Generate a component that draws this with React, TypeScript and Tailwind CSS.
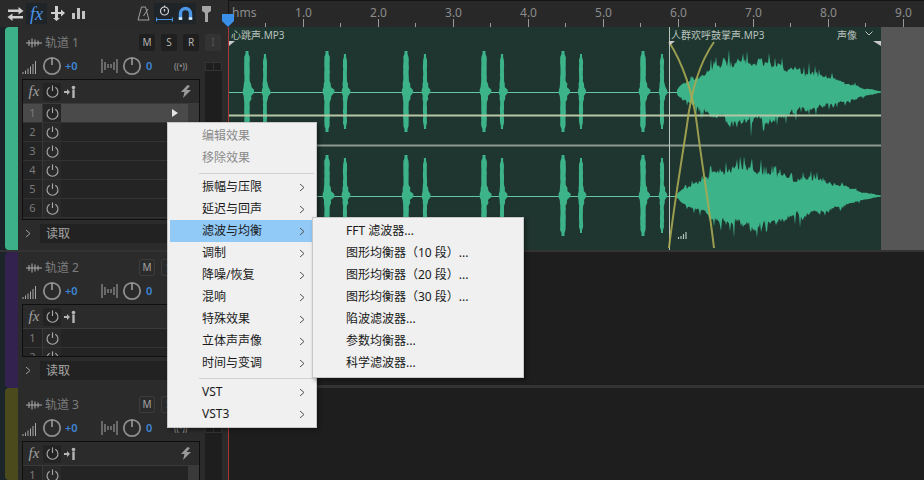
import React from "react";

const rng = (seed: number) => {
  let s = seed;
  return () => {
    s = (s * 1664525 + 1013904223) % 4294967296;
    return s / 4294967296;
  };
};

function burst(x: number, mid: number, h: number, w: number, seed: number) {
  const r = rng(seed);
  const right: string[] = [];
  const left: string[] = [];
  for (let y = -h; y <= h; y += 3) {
    const a = Math.abs(y);
    let hr = w / 2 + r() * 0.4;
    let hl = w / 2 + r() * 0.4;
    if (a < 3) {
      hr = w * 1.35 + r() * 1.2;
      hl = w * 0.8 + r() * 0.6;
    } else if (a < 10) {
      hr = w * 0.75 + r() * 0.8;
      hl = w * 0.6 + r() * 0.4;
    } else if (a > h - 6) {
      hr = w * 0.3;
      hl = w * 0.3;
    }
    right.push(`${(x + hr).toFixed(1)},${mid + y}`);
    left.unshift(`${(x - hl).toFixed(1)},${mid + y}`);
  }
  return "M" + right.concat(left).join("L") + "Z";
}

function envelope(x: number) {
  const pts: [number, number][] = [
    [677, 2], [681, 6], [690, 10], [700, 14], [710, 20], [720, 25], [745, 28], [770, 24],
    [800, 18], [820, 15], [840, 10], [860, 4.5], [881, 0.5],
  ];
  for (let i = 0; i < pts.length - 1; i++) {
    const [a, b] = pts[i];
    const [c, d] = pts[i + 1];
    if (x <= c) return b + ((x - a) / (c - a)) * (d - b);
  }
  return 0;
}

function crowd(mid: number, seed: number, amp: number) {
  const r = rng(seed);
  const top: string[] = [];
  const bot: string[] = [];
  let up0 = 1;
  let dn0 = 1;
  for (let x = 677; x <= 881; x += 1) {
    const e = envelope(x) * amp;
    up0 = up0 * 0.7 + (0.62 + r() * 0.76) * 0.3;
    dn0 = dn0 * 0.7 + (0.62 + r() * 0.76) * 0.3;
    const j = r();
    const k = r();
    const up = e * up0 * (0.9 + r() * 0.2) + (j > 0.88 ? e * (0.15 + r() * 0.35) : 0);
    const dn = e * dn0 * (0.9 + r() * 0.2) + (k > 0.88 ? e * (0.15 + r() * 0.4) : 0);
    top.push(`${x},${(mid - up).toFixed(1)}`);
    bot.unshift(`${x},${(mid + dn).toFixed(1)}`);
  }
  return "M" + top.concat(bot).join("L") + "Z";
}

const BEATS = [247, 265, 327, 345, 406, 425, 484, 502, 563, 581, 643, 662];

function Wave() {
  const paths = React.useMemo(() => {
    const out: string[] = [];
    BEATS.forEach((x, i) => {
      const second = i % 2 === 1;
      out.push(burst(x, 92, second ? 38 : 41, second ? 3.5 : 5, i * 7 + 3));
      out.push(burst(x, 196, second ? 38 : 41, second ? 3.5 : 5, i * 11 + 5));
    });
    out.push(crowd(92, 42, 1.1));
    out.push(crowd(196, 77, 1));
    return out;
  }, []);
  return (
    <svg viewBox="229 27 652 223" width={652} height={223} className="block">
      <path d="M229 92.5H677M229 196.5H677" stroke="#62c7a3" strokeWidth="1" />
      {paths.map((d, i) => (
        <path key={i} d={d} fill="#3db389" />
      ))}
      <path d="M229 115.5H881" stroke="#b6c7a8" strokeWidth="2" />
      <path d="M229 145.5H881" stroke="#8d9a90" strokeWidth="2" />
      <path d="M669.5 27V250" stroke="#b9c4bd" strokeWidth="1" />
      <path d="M669 42C682 62 693 92 697 125C702 165 709 205 714 248" fill="none" stroke="#a8a852" strokeWidth="2" opacity="0.9" />
      <path d="M714 42C700 62 691 92 687 125C681 165 674 205 669 248" fill="none" stroke="#a8a852" strokeWidth="2" opacity="0.9" />
      <path d="M229 46V41H235Z" fill="#c9c9c9" />
      <path d="M669 46V41H675Z" fill="#c9c9c9" />
      <path d="M881 46V41H873Z" fill="#c9c9c9" />
      <path d="M678.5 239v-2M681 239v-3M683.5 239v-5M686 239v-7" stroke="#b5c2bb" strokeWidth="1.2" />
    </svg>
  );
}

function Power({ size = 15 }: { size?: number }) {
  return (
    <svg width={size} height={size} viewBox="0 0 16 16" fill="none" stroke="#a8a8a8" strokeWidth="1.2">
      <path d="M5 3.4A5.8 5.8 0 1 0 11 3.4" />
      <path d="M8 1.5V7.5" />
    </svg>
  );
}

function Knob() {
  return (
    <svg width={20} height={20} viewBox="0 0 20 20" fill="none">
      <circle cx="10" cy="10" r="8.2" stroke="#8e8e8e" strokeWidth="1.8" fill="#2b2b2b" />
      <path d="M10 2V9" stroke="#a5a5a5" strokeWidth="1.5" />
    </svg>
  );
}

function FxHeader({ bolt }: { bolt: boolean }) {
  return (
    <div className="h-[24px] flex items-center border-b border-[#3a3a3a] shrink-0 bg-[#2b2b2b]">
      <span className="w-[16px] ml-[3px] flex justify-center font-['Liberation_Serif',serif] italic text-[#a0a0a0] text-[15px] leading-none">
        fx
      </span>
      <span className="ml-[1px] w-[18px] h-[18px] flex items-center justify-center bg-[#232323] rounded-[2px]">
        <Power />
      </span>
      <svg width={14} height={14} viewBox="0 0 14 14" className="ml-[2px]" fill="#b5b5b5">
        <path d="M1 6H4V4L7 7L4 10V8H1Z" />
        <circle cx="10.5" cy="2.5" r="1.8" />
        <rect x="9.3" y="4.5" width="2.4" height="8.5" />
      </svg>
      {bolt && (
        <svg width={12} height={13} viewBox="0 0 12 13" className="ml-auto mr-[7px]" fill="#9a9a9a">
          <path d="M7.5 0L1 7H4.5L3 13L11 5H6.5L10 1Z" />
        </svg>
      )}
    </div>
  );
}

function FxRow({ n, active }: { n: number; active?: boolean }) {
  return (
    <div className="h-[19px] flex shrink-0 border-b border-[#333333]">
      <div className={`flex flex-1 items-center ${active ? "bg-[#4a4a4a]" : "bg-[#242424]"}`}>
        <span className="w-[20px] text-[11px] text-center text-[#7a7a7a] border-r border-[#383838] leading-[18px]">
          {n}
        </span>
        <span className={`w-[18px] h-[18px] flex items-center justify-center ${active ? "bg-[#262626]" : "bg-[#292929]"}`}>
          <Power />
        </span>
        {active && (
          <svg width={6} height={8} viewBox="0 0 6 8" fill="#e6e6e6" className="ml-auto mr-[10px]">
            <path d="M0 0L6 4L0 8Z" />
          </svg>
        )}
      </div>
      <div className="w-[11px] bg-[#3a3a3a]" />
    </div>
  );
}

function BtnS({ t, dim, outlined }: { t: string; dim?: boolean; outlined?: boolean }) {
  let tone = "bg-[#1f1f1f] text-[#b5b5b5]";
  if (dim) tone = "bg-[#333333] text-[#555555]";
  if (outlined) tone = "bg-[#2b2b2b] border border-[#3c3c3c] text-[#a5a5a5]";
  return (
    <span className={`w-[16px] h-[17px] flex items-center justify-center text-[10px] rounded-[2px] ${tone}`}>{t}</span>
  );
}

function TrackHeader({
  name,
  color,
  fxH,
  rows,
  pt,
  active,
  bolt,
}: {
  name: string;
  color: string;
  fxH: number;
  rows: number;
  pt: number;
  active?: boolean;
  bolt?: boolean;
}) {
  return (
    <div className="w-[228px] h-full flex pl-[5px] shrink-0 bg-[#1b2428] overflow-hidden">
      <div className="w-[13px] rounded-l-[4px] shrink-0" style={{ background: color }} />
      <div className="flex-1 bg-[#2b2b2b] flex flex-col" style={{ paddingTop: pt }}>
        <div className="h-[28px] pt-[3px] flex items-center shrink-0">
          <svg width={16} height={10} viewBox="0 0 16 10" className="ml-[8px]" stroke="#b0b0b0" fill="none">
            <path d="M0 5H16M3 2V8M6 0.5V9.5M9 1.5V8.5M12 2.5V7.5" />
          </svg>
          <span className="ml-[3px] text-[12px] text-[#7d7d7d] w-[94px]">{name}</span>
          <div className="flex gap-[6px]">
            <BtnS t="M" outlined={!active} />
            <BtnS t="S" outlined={!active} />
            <BtnS t="R" outlined={!active} />
            <BtnS t="I" dim />
          </div>
        </div>
        <div className="flex flex-1 min-h-0">
          <div className="w-[187px] flex flex-col shrink-0">
            <div className="h-[22px] flex items-center shrink-0">
              <svg width={16} height={15} viewBox="0 0 16 15" className="ml-[4px]" stroke="#a8a8a8">
                <path d="M1 15V13M3.5 15V11.5M6 15V9.5M8.5 15V7.5M11 15V5M13.5 15V2" />
              </svg>
              <span className="ml-[4px]">
                <Knob />
              </span>
              <span className="ml-[3px] w-[36px] text-[11px] font-semibold text-[#3d86d6]">+0</span>
              <svg width={17} height={14} viewBox="0 0 17 14" stroke="#a8a8a8" fill="none">
                <path d="M1 0V14M4 3V11M7 5V9M10 5V9M13 3V11M16 0V14" />
              </svg>
              <span className="ml-[4px]">
                <Knob />
              </span>
              <span className="ml-[4px] w-[28px] text-[11px] font-semibold text-[#3d86d6]">0</span>
              <span className="text-[8px] text-[#8a8a8a] font-semibold">((•))</span>
            </div>
            <div
              className="ml-[4px] mt-[2px] w-[178px] border border-[#0f0f0f] flex flex-col overflow-hidden shrink-0"
              style={{ height: fxH }}
            >
              <FxHeader bolt={!!bolt} />
              {Array.from({ length: rows }).map((_, i) => (
                <FxRow key={i} n={i + 1} active={active && i === 0} />
              ))}
            </div>
            <div className="h-[19px] mt-[4px] flex items-center shrink-0">
              <svg width={6} height={9} viewBox="0 0 6 9" className="ml-[7px]" fill="none" stroke="#a0a0a0">
                <path d="M1 1L5 4.5L1 8" />
              </svg>
              <span className="ml-[9px] w-[160px] h-[19px] bg-[#222222] text-[12px] text-[#a5a5a5] pl-[6px] leading-[19px]">
                读取
              </span>
            </div>
          </div>
          <div className="w-[17px] mt-[7px] bg-[#1e1e1e] flex flex-col shrink-0">
            <div className="h-[9px] border border-[#333333] flex">
              <div className="flex-1 border-r border-[#333333]" />
              <div className="flex-1" />
            </div>
          </div>
        </div>
      </div>
    </div>
  );
}

function Toolbar() {
  const cell = "w-[21px] h-[21px] flex items-center justify-center";
  return (
    <div className="w-[228px] h-full flex items-center pl-[5px] shrink-0 bg-[#2a2a2a]">
      <span className={cell}>
        <svg width={17} height={14} viewBox="0 0 17 14" fill="#d0d0d0">
          <path d="M1 2.5H11.5V0L16.5 4L11.5 7.5V5H1Z" />
          <path d="M16 9H5.5V6.5L0.5 10L5.5 14V11.5H16Z" />
        </svg>
      </span>
      <span className={`${cell} bg-[#1f2429]`}>
        <span className="font-['Liberation_Serif',serif] italic text-[#4a97e8] text-[18px] leading-none">fx</span>
      </span>
      <span className={cell}>
        <svg width={15} height={15} viewBox="0 0 15 15" fill="#d0d0d0">
          <path d="M5 0H8V6H11V3.5L15 7L11 10.5V8H8V12H10L6.5 15L3 12H5V8H1V6H5Z" />
        </svg>
      </span>
      <span className={cell}>
        <svg width={13} height={11} viewBox="0 0 13 11" fill="#c4c4c4">
          <rect x="0" y="5" width="3" height="6" />
          <rect x="5" y="0" width="3" height="11" />
          <rect x="10" y="3" width="3" height="8" />
        </svg>
      </span>
      <span className={`${cell} ml-[44px]`}>
        <svg width={13} height={15} viewBox="0 0 13 15" fill="none" stroke="#a0a0a0">
          <path d="M4.5 1H8.5L12 14H1Z" />
          <path d="M6.5 10L11 3" />
        </svg>
      </span>
      <span className={`${cell} bg-[#1f2429]`}>
        <svg width={17} height={17} viewBox="0 0 17 17" fill="none" strokeWidth="1.2">
          <circle cx="8.5" cy="6" r="4" stroke="#d5d5d5" />
          <path d="M8.5 0.5V2M8.5 4V6.5" stroke="#d5d5d5" />
          <path d="M0.5 14.5H16.5M0.5 12.5V16.5M16.5 12.5V16.5" stroke="#4a97e8" />
        </svg>
      </span>
      <span className={`${cell} bg-[#1f2429]`}>
        <svg width={15} height={15} viewBox="0 0 15 15" fill="none">
          <path d="M2.5 14V7.5A5 5 0 0 1 12.5 7.5V14" stroke="#4a97e8" strokeWidth="3.4" />
          <path d="M0.8 12.5H4.2M10.8 12.5H14.2" stroke="#d9e8f7" strokeWidth="2.4" />
        </svg>
      </span>
      <span className={cell}>
        <svg width={9} height={16} viewBox="0 0 9 16" fill="#a5a5a5">
          <path d="M0 0H9V5L6 7V16H3V7L0 5Z" />
        </svg>
      </span>
    </div>
  );
}

const RULER = ["1.0", "2.0", "3.0", "4.0", "5.0", "6.0", "7.0", "8.0", "9.0"];

function Ruler() {
  return (
    <div className="flex-1 h-full bg-[#282828] border-t border-l border-[#141414] flex relative text-[12px] text-[#8c8c8c] leading-[20px] pt-[2px]">
      <span className="ml-[3px] w-[34px] shrink-0">hms</span>
      {RULER.map((t) => (
        <span key={t} className="w-[75px] shrink-0 text-center">
          {t}
        </span>
      ))}
      <svg className="absolute left-0 bottom-0" width={696} height={9}>
        {Array.from({ length: 18 }).map((_, i) => {
          const x = 36 + 37.5 * i;
          return <path key={i} d={`M${Math.round(x) + 0.5} ${i % 2 === 0 ? 5 : 1}V9`} stroke="#9a9a9a" />;
        })}
      </svg>
    </div>
  );
}

const MAIN = [
  "振幅与压限",
  "延迟与回声",
  "滤波与均衡",
  "调制",
  "降噪/恢复",
  "混响",
  "特殊效果",
  "立体声声像",
  "时间与变调",
];
const SUB = [
  "FFT 滤波器...",
  "图形均衡器（10 段）...",
  "图形均衡器（20 段）...",
  "图形均衡器（30 段）...",
  "陷波滤波器...",
  "参数均衡器...",
  "科学滤波器...",
];

function Chevron() {
  return (
    <svg width={6} height={9} viewBox="0 0 6 9" fill="none" stroke="#555555" className="ml-auto mr-[7px]">
      <path d="M1 1L5 4.5L1 8" />
    </svg>
  );
}

function MenuItem({ t, hl }: { t: string; hl?: boolean }) {
  return (
    <div className={`h-[22px] flex items-center pl-[32px] ${hl ? "bg-[#91c9f7]" : ""}`}>
      <span className="text-[12px] text-[#1a1a1a]">{t}</span>
      <Chevron />
    </div>
  );
}

function Menus() {
  return (
    <>
      <div className="absolute left-[167px] top-[122px] w-[150px] h-[306px] bg-[#f0f0f0] border border-[#c8c8c8] pt-[2px] px-[2px] shadow-[2px_2px_4px_rgba(0,0,0,0.4)]">
        <div className="h-[22px] flex items-center pl-[32px] text-[12px] text-[#8a8a8a]">编辑效果</div>
        <div className="h-[22px] flex items-center pl-[32px] text-[12px] text-[#8a8a8a]">移除效果</div>
        <div className="h-[1px] bg-[#d2d2d2] ml-[29px] mt-[4px] mb-[2px]" />
        <div className="pr-[2px]">
          {MAIN.map((t) => (
            <MenuItem key={t} t={t} hl={t === "滤波与均衡"} />
          ))}
        </div>
        <div className="h-[1px] bg-[#d2d2d2] ml-[29px] mt-[4px] mb-[2px]" />
        <div className="pr-[2px]">
          <MenuItem t="VST" />
          <MenuItem t="VST3" />
        </div>
      </div>
      <div className="absolute left-[312px] top-[217px] w-[212px] h-[161px] bg-[#f0f0f0] border border-[#c8c8c8] pt-[2px] shadow-[2px_2px_4px_rgba(0,0,0,0.4)]">
        {SUB.map((t) => (
          <div key={t} className="h-[22px] flex items-center pl-[33px] text-[12px] text-[#1a1a1a] whitespace-nowrap">
            {t}
          </div>
        ))}
      </div>
    </>
  );
}

export default function App() {
  return (
    <div className="relative w-[924px] h-[480px] overflow-hidden bg-[#1e1e1e] flex flex-col font-['Noto_Sans','Noto_Sans_CJK_SC',sans-serif]">
      <div className="h-[27px] flex shrink-0">
        <Toolbar />
        <Ruler />
      </div>
      <div className="h-[225px] flex shrink-0 border-b-[2px] border-[#333333]">
        <TrackHeader name="轨道 1" color="#3cb189" fxH={141} rows={6} pt={0} active bolt />
        <div className="flex-1 flex">
          <div className="w-[653px] relative bg-[#1f352f] shrink-0 border-l border-[#8f3232]">
            <Wave />
            <span className="absolute left-[2px] top-[1px] text-[10px] text-[#b8c4be] leading-[14px]">
              心跳声.MP3
            </span>
            <span className="absolute left-[442px] top-[1px] text-[10px] text-[#b8c4be] leading-[14px] whitespace-nowrap">
              人群欢呼鼓掌声.MP3
            </span>
            <span className="absolute left-[608px] top-[1px] text-[10px] text-[#b8c4be] leading-[14px]">声像</span>
            <svg width={8} height={5} viewBox="0 0 8 5" className="absolute left-[636px] top-[4px]" fill="none" stroke="#b8c4be">
              <path d="M0.5 0.5L4 4L7.5 0.5" />
            </svg>
          </div>
          <div className="flex-1 bg-[#565656]" />
        </div>
      </div>
      <div className="h-[136px] flex shrink-0">
        <TrackHeader name="轨道 2" color="#33214f" fxH={53} rows={2} pt={0} />
        <div className="flex-1 bg-[#1e1e1e] border-b-[3px] border-[#333333]" />
      </div>
      <div className="flex-1 flex min-h-0">
        <TrackHeader name="轨道 3" color="#4b4a1c" fxH={60} rows={2} pt={1} bolt />
        <div className="flex-1 bg-[#1e1e1e]" />
      </div>
      <div className="absolute left-[228px] top-[27px] bottom-0 w-[1px] bg-[#a83636]" />
      <svg width={14} height={13} viewBox="0 0 14 13" className="absolute left-[221px] top-[14px]" fill="#3a8fe8">
        <path d="M1 0H13V7L7 13L1 7Z" />
      </svg>
      <Menus />
    </div>
  );
}
